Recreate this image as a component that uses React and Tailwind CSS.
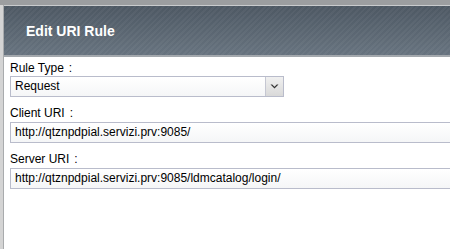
import React from "react";

const font = { fontFamily: '"Liberation Sans", Arial, sans-serif' };

function Label({ children }) {
  return (
    <div className="text-[12px] leading-[14px] text-black">
      {children}
      <span className="ml-[5px]">:</span>
    </div>
  );
}

function Field({ label, value }) {
  return (
    <div className="mt-[9px]">
      <Label>{label}</Label>
      <div className="mt-[2px] h-[21px] w-[460px] border border-[#b9bccb] bg-gradient-to-b from-white to-[#f5f6f7] pl-[4px] text-[12px] leading-[19px] text-black whitespace-nowrap">
        {value}
      </div>
    </div>
  );
}

export default function App() {
  return (
    <div className="w-[450px] h-[249px] overflow-hidden bg-[#dcdcdc] flex flex-col" style={font}>
      <div className="h-[5px] bg-[#9c9ea0] shrink-0" />
      <div className="flex flex-1 min-h-0">
        <div className="w-[3px] shrink-0 bg-[#d4d4d4]" />
        <div className="flex-1 flex flex-col border-l border-[#a9abad] bg-white">
          {/* Header */}
          <div className="h-[52px] shrink-0 border-t border-[#c9cbcd] border-b-2 border-b-[#a3a8ad] bg-[repeating-linear-gradient(135deg,rgba(255,255,255,0.04)_0px,rgba(255,255,255,0.04)_2px,transparent_2px,transparent_4px),linear-gradient(to_bottom,#4d5863,#67737f)] flex items-center pl-[22px]">
            <h1 className="text-[14px] font-bold text-white pt-[2px]">Edit URI Rule</h1>
          </div>

          {/* Body */}
          <div className="pl-[6px] pt-[4px]">
            <Label>Rule Type</Label>
            <div className="mt-[1px] h-[21px] w-[274px] flex border border-[#b9bccb] bg-gradient-to-b from-white to-[#f5f6f7]">
              <div className="flex-1 pl-[4px] text-[12px] leading-[19px] text-black">Request</div>
              <div className="w-[18px] border-l border-[#c5c7d2] bg-gradient-to-b from-[#f0f0f0] to-[#d9d9d9] flex items-center justify-center">
                <svg width="9" height="6" viewBox="0 0 9 6">
                  <path d="M0.5 0.5 L4.5 4.5 L8.5 0.5 L6.8 0.5 L4.5 2.8 L2.2 0.5 Z" fill="#333" />
                </svg>
              </div>
            </div>
            <Field label="Client URI" value="http://qtznpdpial.servizi.prv:9085/" />
            <Field label="Server URI" value="http://qtznpdpial.servizi.prv:9085/ldmcatalog/login/" />
          </div>
        </div>
      </div>
    </div>
  );
}
